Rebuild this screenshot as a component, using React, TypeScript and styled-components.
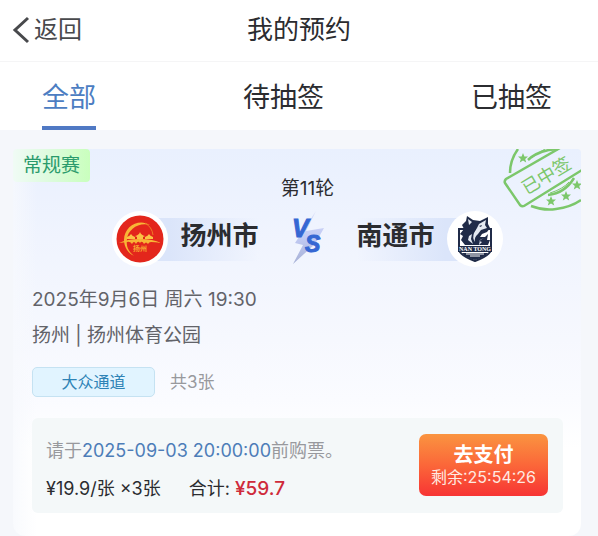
import React from "react";
import styled, { createGlobalStyle } from "styled-components";

const GlobalStyle = createGlobalStyle`
  * { box-sizing: border-box; }
  body {
    margin: 0;
    background: #f5f7fb;
    color: #2b2c30;
    font-family: Inter, "Noto Sans CJK SC", sans-serif;
  }
  button { font-family: inherit; border: 0; background: none; padding: 0; cursor: pointer; }
`;

const Header = styled.header`
  display: grid;
  grid-template-columns: 1fr auto 1fr;
  align-items: center;
  height: 62px;
  padding: 0 12px 2px;
  background: #fff;
  border-bottom: 1px solid #f5f5f6;
`;

const BackButton = styled.button`
  display: flex;
  align-items: center;
  justify-self: start;
  gap: 4px;
  color: #48494c;
  font-size: 24px;
  line-height: 36px;
`;

const Title = styled.h1`
  margin: 0;
  font-size: 26px;
  font-weight: 400;
  line-height: 36px;
`;

const Tabs = styled.nav`
  display: flex;
  justify-content: space-between;
  padding: 0 46px 0 42px;
  background: #fff;
`;

const Tab = styled.button<{ $active?: boolean }>`
  height: 68px;
  padding-top: 8px;
  border-bottom: 4px solid ${(p) => (p.$active ? "#5079c4" : "transparent")};
  color: ${(p) => (p.$active ? "#4c7dc2" : "#2b2c30")};
  font-size: 27px;
  line-height: 56px;
`;

const Content = styled.main`
  padding: 19px 17px 0 13px;
`;

const Card = styled.article`
  position: relative;
  overflow: hidden;
  padding: 28px 18px 23px 19px;
  border-radius: 4px 4px 12px 12px;
  background:
    linear-gradient(90deg, rgba(247, 249, 253, 0.8), rgba(247, 249, 253, 0) 24px),
    linear-gradient(180deg, #e9f0fe 0, #f0f4fe 90px, #f6f8fe 190px, #fafbff 250px, #fff 300px);
`;

const StageBadge = styled.span`
  position: absolute;
  top: 0;
  left: 0;
  padding: 1px 10px 0;
  border-radius: 4px;
  background: linear-gradient(90deg, #f0fbf5, #dcfbdc 50%, #c9ffbd);
  color: #2a9a6c;
  font-size: 19px;
  line-height: 32px;
`;

const Stamp = styled.svg`
  position: absolute;
  top: 0;
  right: 0;
`;

const Round = styled.p`
  margin: 0 0 10px 20px;
  text-align: center;
  font-size: 19px;
  line-height: 24px;
`;

const Match = styled.div`
  display: flex;
  align-items: center;
  justify-content: center;
  gap: 30px;
  margin-left: 20px;
`;

const Team = styled.div<{ $away?: boolean }>`
  display: flex;
  flex-direction: ${(p) => (p.$away ? "row-reverse" : "row")};
  align-items: center;
  gap: 12px;
  background: linear-gradient(${(p) => (p.$away ? "270deg" : "90deg")}, #dbe5fa 30px, rgba(226, 234, 252, 0))
    ${(p) => (p.$away ? "left" : "right")} center / calc(100% - 28px) 43px no-repeat;
`;

const Crest = styled.span`
  display: flex;
  align-items: center;
  justify-content: center;
  width: 56px;
  height: 56px;
  border-radius: 50%;
  background: #fff;
`;

const TeamName = styled.strong`
  padding-bottom: 7px;
  font-size: 26px;
  font-weight: 700;
  line-height: 36px;
`;

const Info = styled.div`
  margin-top: 15px;
  color: #626369;
  font-size: 19px;
  line-height: 36px;
`;

const InfoLine = styled.p`
  margin: 0;
`;

const Channel = styled.div`
  display: flex;
  align-items: center;
  gap: 15px;
  margin-top: 13px;
`;

const ChannelTag = styled.span`
  width: 123px;
  border: 1px solid #c5e2f2;
  border-radius: 5px;
  background: #e1f4ff;
  color: #2e83b6;
  text-align: center;
  font-size: 16px;
  line-height: 28px;
`;

const Count = styled.span`
  color: #98999d;
  font-size: 17px;
  line-height: 30px;
`;

const Payment = styled.section`
  display: flex;
  align-items: flex-start;
  justify-content: space-between;
  margin-top: 21px;
  padding: 14px 15px 5px 14px;
  border-radius: 6px;
  background: #f4f8f9;
`;

const Notice = styled.p`
  margin: 0;
  color: #98999d;
  font-size: 18px;
  line-height: 38px;
`;

const Deadline = styled.time`
  color: #4d7db8;
`;

const Price = styled.p`
  display: flex;
  gap: 28px;
  margin: 0;
  font-size: 18px;
  line-height: 38px;
`;

const Amount = styled.b`
  color: #cf2b3b;
  font-size: 19px;
  font-weight: 500;
`;

const PayButton = styled.button`
  width: 129px;
  height: 62px;
  margin-top: 2px;
  border-radius: 7px;
  background: linear-gradient(180deg, #fa9440, #fb6739 50%, #f73434);
  color: #fff;
`;

const PayLabel = styled.span`
  display: block;
  font-size: 20px;
  font-weight: 700;
  line-height: 24px;
`;

const Remaining = styled.span`
  display: block;
  color: #ffeae2;
  font-size: 16px;
  line-height: 20px;
`;

const STAR = "M0-5 1.4-1.6 5-1.4 2.2.9 3.2 4.4 0 2.4-3.2 4.4-2.2.9-5-1.4-1.4-1.6Z";

const WonStamp = () => (
  <Stamp width="80" height="64" viewBox="0 0 80 64" fill="none" stroke="#7cc76b" strokeWidth="2.5" aria-label="已中签">
    <path d="M17 0Q9 11 9 24" />
    <path d="M30 57Q43 62 55 60Q70 58 80 51" />
    <path d="M27 11Q37 1 57 0" />
    <path d="M31 9Q38 3 44 0" strokeWidth="1" />
    <path d="M47 46Q64 44 73 29" />
    <path d="M49 44Q62 40 68 33" strokeWidth="1" />
    <path d="M59-1 5 30Q3 32 4 34L19 56Q21 58 23 57L81 21" />
    <g fill="#7cc76b" stroke="none">
      <path d={STAR} transform="translate(22 9)" />
      <path d={STAR} transform="translate(50 52)" />
      <path d={STAR} transform="translate(65 47)" />
      <path d={STAR} transform="translate(76 36)" />
      <text x="45" y="33" fontSize="18" fontWeight="400" textAnchor="middle" transform="rotate(-31 45 26)">
        已中签
      </text>
    </g>
  </Stamp>
);

const YangzhouCrest = () => (
  <svg width="48" height="48" viewBox="0 0 48 48" aria-hidden="true">
    <circle cx="24" cy="24" r="23.5" fill="#e3261c" />
    <path d="M34 10C23 3 8 11 8 25c0 7 4 13 10 16-6-5-8-10-7-17 1-9 11-17 23-14Z" fill="#f8b536" />
    <path d="M29 8q7 4 8 12" fill="none" stroke="#ee7b26" strokeWidth="1" />
    <path d="M3 28q8-4 21-4t21 4q-7-1-10-1-2 0-3 2-2-3-4 0-2-4-4-1-2-3-4 1-2-4-4 0-2-3-5-2Z" fill="#f8b536" />
    <path d="M11 22q3-1 4-3 1 2 4 3v2h-8ZM19 21q4-1 5-4 1 3 5 4l-2 1v2h-6v-2ZM29 22q3-1 4-3 1 2 4 3v2h-8Z" fill="#fbc345" />
    <text x="24" y="36" fill="#f8a831" fontSize="7" fontWeight="700" textAnchor="middle">扬州</text>
  </svg>
);

const NantongCrest = () => (
  <svg width="40" height="48" viewBox="0 0 40 48" aria-hidden="true">
    <path d="M9 14H4v20q0 6 16 12 16-6 16-12V14h-4" fill="#fff" stroke="#202b48" strokeWidth="2" />
    <path d="M12 1 18 5l7 1 8-4v7l2 4-3 4-5 2-2 3 5 0 3-3-1 6 3 0-2 5H10l-4-5 2-4-3-2 4-5-2-4 4-4Z" fill="#202b48" />
    <path d="m13 4 4 3-3 3ZM31 5l-1 5 2 3-6 2-3 4q-4 3-3 8-3-4-1-9l3-5 2-4ZM17 19l-1 5 2 5-5-4 1-4ZM29 23l-5 3 3 1-3 3 1-5Z" fill="#e4e9f1" />
    <path d="m24 11 3-1-1 2Z" fill="#202b48" />
    <path d="M3 31h34v6H3Z" fill="#202b48" />
    <text x="20" y="36" fill="#fff" fontFamily="Liberation Serif" fontSize="6" fontWeight="700" textAnchor="middle">NAN TONG</text>
    <path d="M7 38h26q-3 4-13 7Q10 42 7 38Z" fill="#202b48" />
    <path d="M11 39h18M15 41h10" stroke="#fff" strokeWidth="1" />
  </svg>
);

const Versus = () => (
  <svg width="38" height="56" viewBox="0 0 38 56" aria-label="VS">
    <defs>
      <linearGradient id="bolt" x1="0" y1="0" x2="0" y2="1">
        <stop offset="0" stopColor="#d2d7f6" />
        <stop offset="0.5" stopColor="#b9c3f2" />
        <stop offset="1" stopColor="#9aa5ce" />
      </linearGradient>
    </defs>
    <path d="M27 0 17 20l18-3-9 16L4 53 14 34 6 32Z" fill="url(#bolt)" opacity="0.85" />
    <g fill="#3567d3" stroke="#3567d3" strokeWidth="1" fontFamily="Liberation Sans" fontStyle="italic" fontWeight="700">
      <text x="3" y="26" fontSize="25">V</text>
      <text x="16" y="41" fontSize="23">S</text>
    </g>
  </svg>
);

export default function App() {
  return (
    <>
      <GlobalStyle />
      <Header>
        <BackButton type="button">
          <svg width="18" height="28" viewBox="0 0 18 28" fill="none" stroke="#48494c" strokeWidth="3" aria-hidden="true">
            <path d="M16 2 3 14l13 12" />
          </svg>
          返回
        </BackButton>
        <Title>我的预约</Title>
      </Header>
      <Tabs>
        <Tab type="button" $active>全部</Tab>
        <Tab type="button">待抽签</Tab>
        <Tab type="button">已抽签</Tab>
      </Tabs>
      <Content>
        <Card>
          <StageBadge>常规赛</StageBadge>
          <WonStamp />
          <Round>第11轮</Round>
          <Match>
            <Team>
              <Crest><YangzhouCrest /></Crest>
              <TeamName>扬州市</TeamName>
            </Team>
            <Versus />
            <Team $away>
              <Crest><NantongCrest /></Crest>
              <TeamName>南通市</TeamName>
            </Team>
          </Match>
          <Info>
            <InfoLine>2025年9月6日 周六 19:30</InfoLine>
            <InfoLine>扬州 | 扬州体育公园</InfoLine>
          </Info>
          <Channel>
            <ChannelTag>大众通道</ChannelTag>
            <Count>共3张</Count>
          </Channel>
          <Payment>
            <div>
              <Notice>
                请于<Deadline>2025-09-03 20:00:00</Deadline>前购票。
              </Notice>
              <Price>
                <span>¥19.9/张 ×3张</span>
                <span>合计: <Amount>¥59.7</Amount></span>
              </Price>
            </div>
            <PayButton type="button">
              <PayLabel>去支付</PayLabel>
              <Remaining>剩余:25:54:26</Remaining>
            </PayButton>
          </Payment>
        </Card>
      </Content>
    </>
  );
}
